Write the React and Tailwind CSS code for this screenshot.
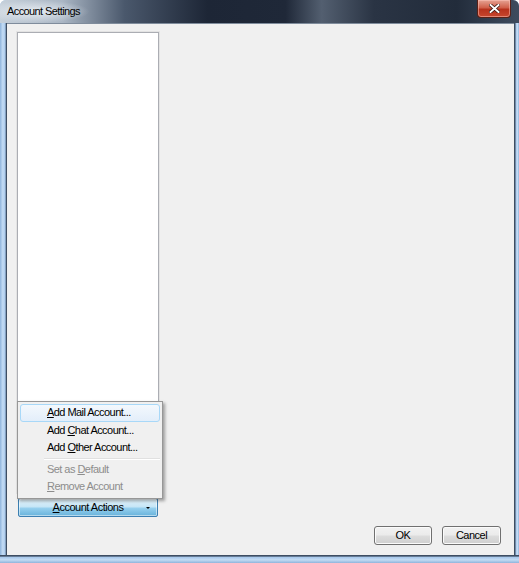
import React from 'react';

const FONT = { fontFamily: '"Liberation Sans", Arial, sans-serif' };

function Key({ children }) {
  return <span className="underline underline-offset-[1px]">{children}</span>;
}

const MENU = [
  { pre: '', key: 'A', post: 'dd Mail Account...', hot: true },
  { pre: 'Add ', key: 'C', post: 'hat Account...' },
  { pre: 'Add ', key: 'O', post: 'ther Account...' },
  { sep: true },
  { pre: 'Set as ', key: 'D', post: 'efault', disabled: true },
  { pre: '', key: 'R', post: 'emove Account', disabled: true },
];

function WinButton({ children, className = '' }) {
  return (
    <button
      className={`h-[19px] rounded-[3px] border border-[#707070] bg-[linear-gradient(#f2f2f2_0%,#ebebeb_48%,#dddddd_52%,#cfcfcf_100%)] text-[11px] tracking-[-0.5px] text-black shadow-[inset_0_0_0_1px_#fbfbfb] ${className}`}
    >
      {children}
    </button>
  );
}

export default function App() {
  return (
    <div
      className="w-[519px] h-[563px] flex flex-col overflow-hidden rounded-t-[6px] bg-[#a9c9ec] select-none"
      style={FONT}
    >
      {/* Title bar */}
      <div className="relative h-[23px] shrink-0 bg-[linear-gradient(90deg,#c6d0da_0%,#aab6c4_12%,#4a586c_24%,#1d2636_40%,#1f2838_55%,#535f70_62%,#2a3444_72%,#222c3b_88%,#3f4c5e_100%)]">
        <div className="absolute left-0 top-0 h-[23px] w-[90px] bg-[radial-gradient(ellipse_at_40%_50%,rgba(235,240,246,0.9),rgba(235,240,246,0)_70%)]" />
        <span className="absolute left-[7px] top-[5px] text-[11px] leading-[13px] tracking-[-0.6px] text-black">
          Account Settings
        </span>
        <div className="absolute right-[8px] top-0 h-[18px] w-[34px] rounded-b-[4px] border border-t-0 border-[#5a2016] bg-[linear-gradient(#e6a394_0%,#d0604a_45%,#b7321d_55%,#c7472e_100%)] shadow-[inset_0_0_0_1px_rgba(255,200,190,0.5)] flex items-center justify-center">
          <svg width="11" height="9" viewBox="0 0 11 9">
            <path d="M1.5 1 L9.5 8 M9.5 1 L1.5 8" stroke="#3a1a14" strokeWidth="3.4" strokeLinecap="square" />
            <path d="M1.5 1 L9.5 8 M9.5 1 L1.5 8" stroke="#ffffff" strokeWidth="1.9" strokeLinecap="square" />
          </svg>
        </div>
      </div>

      {/* Frame + client */}
      <div className="flex flex-1 min-h-0">
        <div className="w-[7px] shrink-0 bg-[linear-gradient(90deg,#8fb4dc_0%,#c4dcf4_40%,#a9c9ec_75%,#3d4d62_86%)]" />
        <div className="relative flex-1 flex flex-col bg-[#f0f0f0] pt-[8px] pb-[10px] border-t border-[#7f8c9c]">
          <div className="flex-1 min-h-0 flex">
            <div className="ml-[10px] w-[142px] flex flex-col gap-[5px]">
              <div className="flex-1 bg-white border border-[#abadb3] shadow-[0_0_0_1px_#e3e3e3]" />
              <button className="mx-[1px] h-[19px] rounded-[2px] border border-[#3c7fb1] bg-[linear-gradient(#e5f4fc_0%,#c4e5f6_48%,#98d1ef_52%,#68b3db_100%)] shadow-[inset_0_0_0_1px_rgba(255,255,255,0.5)] relative text-[11px] tracking-[-0.5px] text-black">
                <span>
                  <Key>A</Key>ccount Actions
                </span>
                <span className="absolute right-[7px] top-[8px] w-0 h-0 border-l-[2px] border-r-[2px] border-t-[2px] border-l-transparent border-r-transparent border-t-black" />
              </button>
            </div>
          </div>
          <div className="mt-[9px] flex justify-end gap-[10px] pr-[13px]">
            <WinButton className="w-[58px]">OK</WinButton>
            <WinButton className="w-[59px]">Cancel</WinButton>
          </div>

          {/* Dropdown menu */}
          <div className="absolute left-[10px] top-[377px] w-[146px] h-[98px] bg-[#f0f0f0] border border-[#979797] shadow-[2px_2px_3px_rgba(0,0,0,0.35)] p-[2px] flex flex-col text-[11px] tracking-[-0.55px]">
            {MENU.map((m, i) =>
              m.sep ? (
                <div key={i} className="ml-[24px] my-[1px] h-[2px] border-t border-[#e0e0e0] border-b border-b-white" />
              ) : (
                <div
                  key={i}
                  className={`h-[18px] leading-[15px] pl-[26px] rounded-[3px] border ${
                    m.hot
                      ? 'border-[#a8d8f8] bg-[linear-gradient(#f3f8fd,#e3eefa)]'
                      : 'border-transparent'
                  } ${m.disabled ? 'text-[#8d8d8d]' : 'text-black'}`}
                >
                  <span>
                    {m.pre}
                    <Key>{m.key}</Key>
                    {m.post}
                  </span>
                </div>
              )
            )}
          </div>
        </div>
        <div className="w-[5px] shrink-0 bg-[linear-gradient(90deg,#3d4d62_0%,#3d4d62_20%,#a9c9ec_40%,#c4dcf4_70%,#8fb4dc_100%)]" />
      </div>
      <div className="h-[8px] shrink-0 bg-[linear-gradient(#3d4d62_0%,#3d4d62_12%,#a9c9ec_30%,#c4dcf4_60%,#8fb4dc_100%)]" />
    </div>
  );
}
